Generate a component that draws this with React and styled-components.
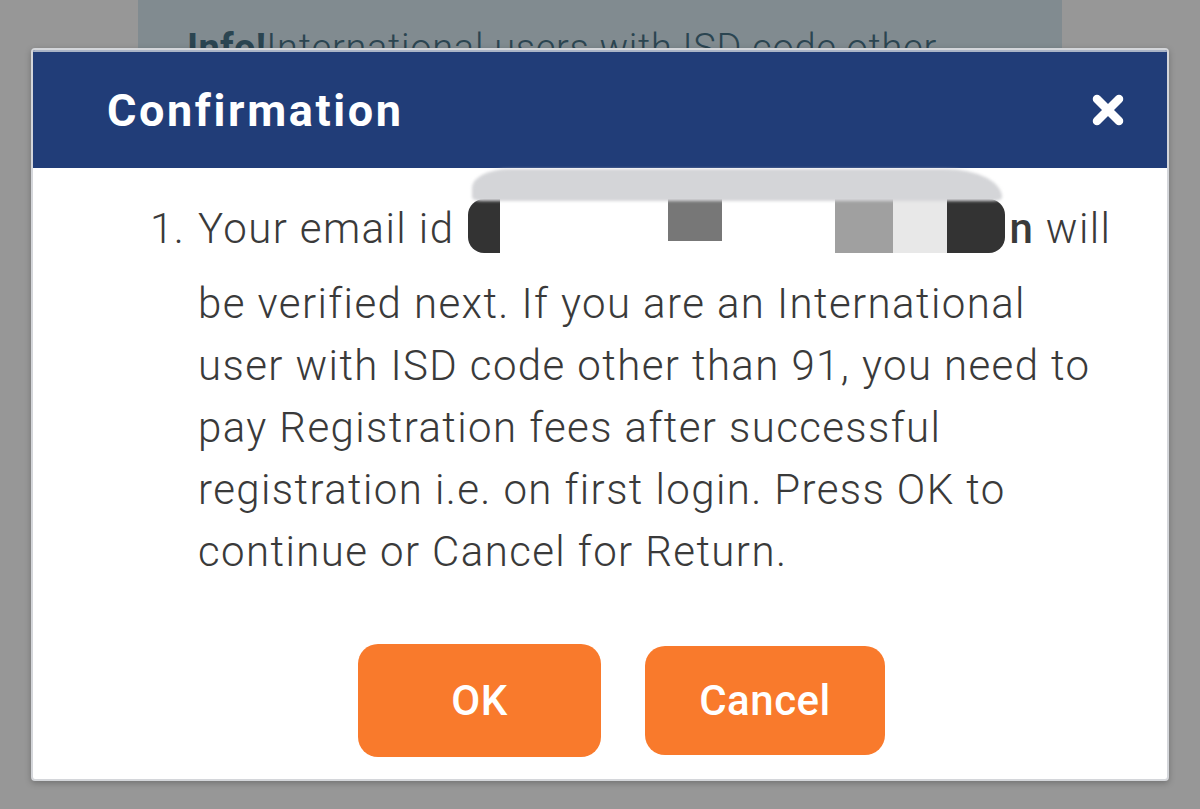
import React from 'react';
import styled, { createGlobalStyle } from 'styled-components';

const GlobalStyle = createGlobalStyle`
  html, body {
    margin: 0;
    padding: 0;
    background: #979797;
  }
  * {
    box-sizing: border-box;
  }
`

const Screen = styled.div`
  position: relative;
  width: 1200px;
  height: 809px;
  overflow: hidden;
  background: #979797;
  font-family: Roboto, "Noto Sans", sans-serif;
`

const BackPanel = styled.div`
  margin: 0 138px;
  height: 120px;
  background: #818b90;
  padding: 26px 0 0 49px;
`

const InfoText = styled.div`
  font-size: 38px;
  font-weight: 300;
  color: #2b4551;
  letter-spacing: 0.7px;
  white-space: nowrap;
  b {
    font-weight: 700;
    letter-spacing: 0.3px;
  }
`

const Modal = styled.div`
  position: absolute;
  left: 31px;
  top: 48px;
  width: 1138px;
  height: 733px;
  background: #fff;
  border: 2px solid #d4d6da;
  border-radius: 4px;
  box-shadow: 0 2px 6px rgba(0, 0, 0, 0.25);
  display: flex;
  flex-direction: column;
  overflow: hidden;
`

const Header = styled.div`
  height: 118px;
  flex-shrink: 0;
  background: #213d78;
  border-top: 2px solid #aab4c6;
  display: flex;
  align-items: center;
  justify-content: space-between;
  padding: 0 40px 0 74px;
`

const Title = styled.h2`
  margin: 0;
  color: #fff;
  font-size: 45px;
  font-weight: 700;
  letter-spacing: 2.6px;
`

const CloseButton = styled.button`
  border: 0;
  background: none;
  padding: 0;
  width: 38px;
  height: 38px;
  display: flex;
  align-items: center;
  justify-content: center;
  cursor: pointer;
`

const Body = styled.div`
  flex: 1;
  display: flex;
  flex-direction: column;
  padding: 30px 0 0 117px;
`

const ListItem = styled.div`
  display: flex;
  color: #3a3a3a;
  font-size: 42px;
  font-weight: 300;
  letter-spacing: 1.4px;
`

const Num = styled.span`
  width: 48px;
  flex-shrink: 0;
  line-height: 62px;
  letter-spacing: 0.5px;
`

const Message = styled.p`
  margin: 0;
  line-height: 62px;
  white-space: nowrap;
`

const FirstLine = styled.span`
  display: block;
  line-height: 62px;
  margin-bottom: 13px;
`

const Redaction = styled.span`
  position: relative;
  display: inline-flex;
  height: 54px;
  vertical-align: -10px;
  margin: 0 4px 0 14px;
`

const Smear = styled.span`
  position: absolute;
  left: 4px;
  top: -30px;
  width: 530px;
  height: 32px;
  background: #d4d5d8;
  border-radius: 40px 60px 10px 10px / 20px 30px 4px 4px;
  filter: blur(1.5px);
`

const Patch = styled.span`
  display: block;
  width: ${p => p.w}px;
  height: ${p => p.h || 54}px;
  background: ${p => p.c};
  border-radius: ${p => p.r || '0'};
`

const BoldN = styled.span`
  font-weight: 500;
`

const Buttons = styled.div`
  margin-top: auto;
  display: flex;
  gap: 44px;
  padding: 0 0 22px 208px;
  align-items: center;
`

const ActionButton = styled.button`
  width: ${p => p.w}px;
  height: ${p => p.h}px;
  border: 0;
  border-radius: 20px;
  background: #f97a2c;
  color: #fff;
  font-family: Roboto, "Noto Sans", sans-serif;
  font-size: 42px;
  font-weight: 500;
  letter-spacing: 0.5px;
  cursor: pointer;
`

const App = () => {
  return (
    <Screen>
      <GlobalStyle />
      <BackPanel>
        <InfoText>
          <b>Info!</b>International users with ISD code other
        </InfoText>
      </BackPanel>

      <Modal>
        <Header>
          <Title>Confirmation</Title>
          <CloseButton aria-label="Close">
            <svg width="36" height="36" viewBox="0 0 36 36">
              <path d="M7 7 L29 29 M29 7 L7 29" stroke="#fff" strokeWidth="8.5" strokeLinecap="round" />
            </svg>
          </CloseButton>
        </Header>

        <Body>
          <ListItem>
            <Num>1.</Num>
            <Message>
              <FirstLine>
                Your email id
                <Redaction>
                  <Smear />
                  <Patch w={32} c="#333" r="16px 0 0 16px" />
                  <Patch w={168} c="#fff" />
                  <Patch w={54} h={42} c="#777" />
                  <Patch w={113} c="#fff" />
                  <Patch w={58} c="#a0a0a0" />
                  <Patch w={54} c="#e8e8e8" />
                  <Patch w={58} c="#333" r="0 16px 16px 0" />
                </Redaction>
                <BoldN>n</BoldN> will
              </FirstLine>
              be verified next. If you are an International<br />
              user with ISD code other than 91, you need to<br />
              pay Registration fees after successful<br />
              registration i.e. on first login. Press OK to<br />
              continue or Cancel for Return.
            </Message>
          </ListItem>

          <Buttons>
            <ActionButton w={243} h={113}>OK</ActionButton>
            <ActionButton w={240} h={109}>Cancel</ActionButton>
          </Buttons>
        </Body>
      </Modal>
    </Screen>
  );
}

export default App;
